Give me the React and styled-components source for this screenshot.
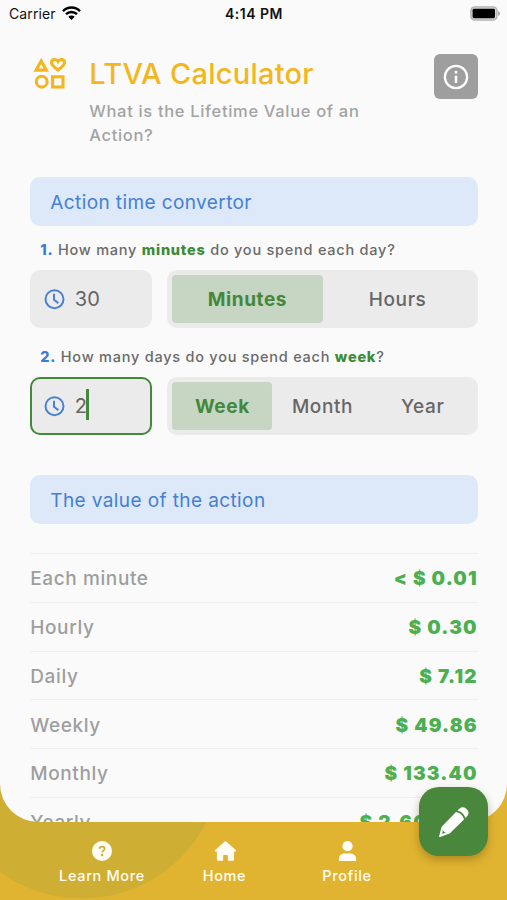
import React from "react";
import styled, { createGlobalStyle, css } from "styled-components";

const GlobalStyle = createGlobalStyle`
  * {
    box-sizing: border-box;
  }
  body {
    margin: 0;
    font-family: Inter, "Liberation Sans", sans-serif;
    background: #e0b431;
  }
`;

const Screen = styled.div`
  position: relative;
  display: flex;
  flex-direction: column;
  width: 507px;
  height: 900px;
  overflow: hidden;
  background: radial-gradient(circle at 82px 759px, #cfae34 139px, #e0b431 140px);
`;
const Sheet = styled.main`
  height: 822px;
  overflow: hidden;
  background: #fafafa;
  border-radius: 0 0 38px 38px;
`;
const StatusBar = styled.div`
  display: grid;
  grid-template-columns: 1fr auto 1fr;
  align-items: center;
  height: 27px;
  padding: 0 7px 0 9px;
  color: #111;
  font-size: 14px;
`;
const Carrier = styled.div`
  display: flex;
  align-items: center;
  gap: 6px;
  letter-spacing: 0.1px;
`;
const Time = styled.div`
  margin-right: 1px;
  font-weight: 600;
  letter-spacing: 0.5px;
`;
const Battery = styled.svg`
  justify-self: end;
`;
const Content = styled.div`
  padding: 27.4px 29.3px 0 30.3px;
`;
const Header = styled.header`
  display: flex;
  align-items: flex-start;
  height: 122.6px;
`;
const Logo = styled.svg`
  flex: none;
  margin: 3px 22px 0 3px;
`;
const Heading = styled.div`
  flex: 1;
`;
const Title = styled.h1`
  margin: 0;
  color: #f3b71d;
  font-size: 29px;
  font-weight: 500;
  line-height: 39px;
  letter-spacing: 0.25px;
  white-space: nowrap;
`;
const Subtitle = styled.p`
  width: 300px;
  margin: 5.5px 0 0;
  color: #a3a3a3;
  font-size: 16.5px;
  font-weight: 500;
  line-height: 24px;
  letter-spacing: 0.67px;
`;
const InfoButton = styled.button`
  display: flex;
  align-items: center;
  justify-content: center;
  width: 44px;
  height: 44.5px;
  padding: 0;
  border: 0;
  border-radius: 6px;
  background: #9e9e9e;
`;
const SectionTitle = styled.h2`
  height: 49px;
  margin: 0;
  padding-left: 20px;
  border-radius: 10px;
  background: #dde8f8;
  color: #4480d2;
  font-size: 19px;
  font-weight: 400;
  line-height: 51px;
  letter-spacing: 0.4px;
`;
const Question = styled.p`
  height: 44px;
  margin: 0;
  padding: 2px 0 0 10px;
  color: #6a6a6a;
  font-size: 14.5px;
  font-weight: 500;
  line-height: 44.5px;
  letter-spacing: 0.76px;
`;
const Number = styled.b`
  color: #3c7bd4;
  font-weight: 800;
`;
const Unit = styled.b`
  color: #3d8a37;
  font-weight: 800;
`;
const Controls = styled.div`
  display: grid;
  grid-template-columns: 122px 1fr;
  gap: 15px;
  height: 58px;
`;
const Field = styled.div`
  display: flex;
  align-items: center;
  gap: 9.5px;
  padding: 1px 0 0 14px;
  border-radius: 10px;
  background: #ebebeb;
  color: #646464;
  font-size: 20px;
  letter-spacing: 0.2px;

  ${(props) =>
    props.$focused &&
    css`
      box-shadow: inset 0 0 0 2px #43883b;
    `}
`;
const Value = styled.span`
  display: flex;
  align-items: center;
`;
const Caret = styled.span`
  width: 2.5px;
  height: 31px;
  margin: -3px 0 0 -1px;
  background: #43883b;
`;
const Segments = styled.div`
  display: grid;
  grid-auto-flow: column;
  grid-auto-columns: 1fr;
  padding: 5px;
  border-radius: 10px;
  background: #ebebeb;
`;
const Segment = styled.button`
  padding: 2px 0 0;
  border: 0;
  border-radius: 4px;
  background: ${(props) => (props.$active ? "#c7d5c3" : "transparent")};
  color: ${(props) => (props.$active ? "#43883b" : "#666")};
  font-family: inherit;
  font-size: 19px;
  font-weight: ${(props) => (props.$active ? 700 : 500)};
  letter-spacing: 0.6px;
`;
const ConvertorSection = styled.section`
  height: 298px;
`;
const FirstControls = styled(Controls)`
  margin-bottom: 5px;
`;
const ValueList = styled.div`
  margin-top: 29px;
`;
const ValueRow = styled.div`
  display: flex;
  align-items: center;
  justify-content: space-between;
  height: 48.8px;
  padding-top: 1.5px;
  border-top: 1px solid #efefef;
  color: #9e9e9e;
  font-size: 19px;
  font-weight: 500;
  letter-spacing: 0.6px;
`;
const Amount = styled.span`
  color: #4caf50;
  font-weight: 900;
  letter-spacing: 1.15px;
`;
const NavBar = styled.nav`
  display: flex;
  justify-content: center;
  height: 78px;
  padding: 18px 58px 0 0;
`;
const NavItem = styled.a`
  display: flex;
  flex-direction: column;
  align-items: center;
  width: 122.5px;
  color: #fffdf5;
  font-size: 14.5px;
  font-weight: 500;
  line-height: 20px;
  letter-spacing: 0.65px;

  svg {
    margin-bottom: 4px;
  }
`;
const EditButton = styled.button`
  position: absolute;
  right: 19px;
  bottom: 44px;
  display: flex;
  align-items: center;
  justify-content: center;
  width: 69px;
  height: 69px;
  padding: 0;
  border: 0;
  border-radius: 20px;
  background: #48873c;
  box-shadow: 0 4px 8px rgba(90, 60, 0, 0.35);
`;

const WifiIcon = () => (
  <svg width="19" height="15" viewBox="0 0 19 15" fill="none" stroke="#000" strokeWidth="2.4">
    <path d="M1 5.1a12 12 0 0 1 17 0" />
    <path d="M4 8.2a7.8 7.8 0 0 1 11 0" />
    <path d="M9.5 14.1 6.3 10.8a4.5 4.5 0 0 1 6.4 0z" fill="#000" stroke="none" />
  </svg>
);

const BatteryIcon = () => (
  <Battery width="30" height="15" viewBox="0 0 30 15">
    <rect x="0.9" y="0.9" width="26" height="13.2" rx="3.8" fill="#d4d4d4" stroke="#b0b0b0" strokeWidth="1.4" />
    <rect x="2.6" y="2.8" width="22.4" height="9.4" rx="1.4" fill="#000" />
    <path d="M28.2 5c2.2 1 2.2 4 0 5z" fill="#a0a0a0" />
  </Battery>
);

const ShapesIcon = () => (
  <Logo width="34" height="33" viewBox="0 0 34 33" fill="none" stroke="#f3b71d" strokeWidth="3.1">
    <path d="M8.2 4 13.3 13.1H3.1z" />
    <path d="M25 13c-3.8-2.9-6.5-4.9-6.5-7.3 0-3.6 4.5-4.2 6.5-1.2 2-3 6.5-2.4 6.5 1.2 0 2.4-2.7 4.4-6.5 7.3z" />
    <circle cx="8.7" cy="24.7" r="5.4" />
    <rect x="19.6" y="19.8" width="10.4" height="10.2" />
  </Logo>
);

const InfoIcon = () => (
  <svg width="26" height="26" viewBox="0 0 26 26" fill="none" stroke="#fff">
    <circle cx="13" cy="13" r="11.1" strokeWidth="2.3" />
    <path d="M13 11.8V19M13 7v2.6" strokeWidth="2.5" />
  </svg>
);

const ClockIcon = () => (
  <svg width="21" height="21" viewBox="0 0 21 21" fill="none" stroke="#4a82d0" strokeWidth="2">
    <circle cx="10.5" cy="10.2" r="9" />
    <path d="M10 4.7v6l4.4 3.4" />
  </svg>
);

const HelpIcon = () => (
  <svg width="22" height="22" viewBox="0 0 22 22">
    <circle cx="11" cy="11" r="10" fill="#fffdf5" />
    <path
      d="M8.5 8.9c.2-1.5 1.2-2.2 2.6-2.2 1.5 0 2.5.9 2.5 2.1 0 1.9-2.4 1.8-2.4 3.7"
      fill="none"
      stroke="#cfae34"
      strokeWidth="1.8"
    />
    <circle cx="11.1" cy="15" r="1.2" fill="#cfae34" />
  </svg>
);

const HomeIcon = () => (
  <svg width="24" height="22" viewBox="0 0 24 22" fill="#fffdf5">
    <path d="M11.5 1.7a1.6 1.6 0 0 1 2 0l9.2 8.4c.8.8.4 1.7-.6 1.7h-1v7.4c0 1-.6 1.6-1.6 1.6h-4.6v-4.6c0-.8-.5-1.3-1.3-1.3h-2.2c-.8 0-1.3.5-1.3 1.3v4.6H5.5c-1 0-1.6-.6-1.6-1.6v-7.4h-1c-1 0-1.4-.9-.6-1.7z" />
  </svg>
);

const ProfileIcon = () => (
  <svg width="20" height="22" viewBox="0 0 20 22" fill="#fffdf5">
    <circle cx="10.5" cy="6.2" r="5.1" />
    <path d="M1.9 21v-2.4c0-3.4 3.2-5.2 6-5.2h5.2c2.8 0 6 1.8 6 5.2V21z" />
  </svg>
);

const PencilIcon = () => (
  <svg width="30" height="30" viewBox="0 0 30 30" fill="#fff">
    <path d="M18.4 3.6 20.6 1.6c2-1.8 4.6-1.7 6.6.1l.8.8c2 2 2 4.6.3 6.5l-2 2.1c-.9-3.6-4-6.8-7.9-7.5z" />
    <path d="M17 4.9c4.4.8 7.3 3.8 8 7.6L11.2 25.9c-.4.4-.9.7-1.4.9L1 30c-.6.2-1-.2-.9-.8L2.4 20.6c.2-.6.5-1.2 1-1.7z" />
    <path d="M3.9 22.4c.3 1.8 1.4 2.9 3.2 3.2l-3.9 1.5z" fill="#48873c" />
  </svg>
);

const values = [
  ["Each minute", "< $ 0.01"],
  ["Hourly", "$ 0.30"],
  ["Daily", "$ 7.12"],
  ["Weekly", "$ 49.86"],
  ["Monthly", "$ 133.40"],
  ["Yearly", "$ 2,600.28"],
];

const App = () => {
  return (
    <Screen>
      <GlobalStyle />
      <Sheet>
        <StatusBar>
          <Carrier>
            Carrier
            <WifiIcon />
          </Carrier>
          <Time>4:14 PM</Time>
          <BatteryIcon />
        </StatusBar>
        <Content>
          <Header>
            <ShapesIcon />
            <Heading>
              <Title>LTVA Calculator</Title>
              <Subtitle>What is the Lifetime Value of an Action?</Subtitle>
            </Heading>
            <InfoButton aria-label="Info">
              <InfoIcon />
            </InfoButton>
          </Header>
          <ConvertorSection>
            <SectionTitle>Action time convertor</SectionTitle>
            <Question>
              <Number>1.</Number> How many <Unit>minutes</Unit> do you spend each day?
            </Question>
            <FirstControls>
              <Field>
                <ClockIcon />
                <Value>30</Value>
              </Field>
              <Segments>
                <Segment $active>Minutes</Segment>
                <Segment>Hours</Segment>
              </Segments>
            </FirstControls>
            <Question>
              <Number>2.</Number> How many days do you spend each <Unit>week</Unit>?
            </Question>
            <Controls>
              <Field $focused>
                <ClockIcon />
                <Value>
                  2<Caret />
                </Value>
              </Field>
              <Segments>
                <Segment $active>Week</Segment>
                <Segment>Month</Segment>
                <Segment>Year</Segment>
              </Segments>
            </Controls>
          </ConvertorSection>
          <SectionTitle>The value of the action</SectionTitle>
          <ValueList>
            {values.map(([label, amount]) => (
              <ValueRow key={label}>
                {label}
                <Amount>{amount}</Amount>
              </ValueRow>
            ))}
          </ValueList>
        </Content>
      </Sheet>
      <NavBar>
        <NavItem>
          <HelpIcon />
          Learn More
        </NavItem>
        <NavItem>
          <HomeIcon />
          Home
        </NavItem>
        <NavItem>
          <ProfileIcon />
          Profile
        </NavItem>
      </NavBar>
      <EditButton aria-label="Edit">
        <PencilIcon />
      </EditButton>
    </Screen>
  );
};

export default App;
